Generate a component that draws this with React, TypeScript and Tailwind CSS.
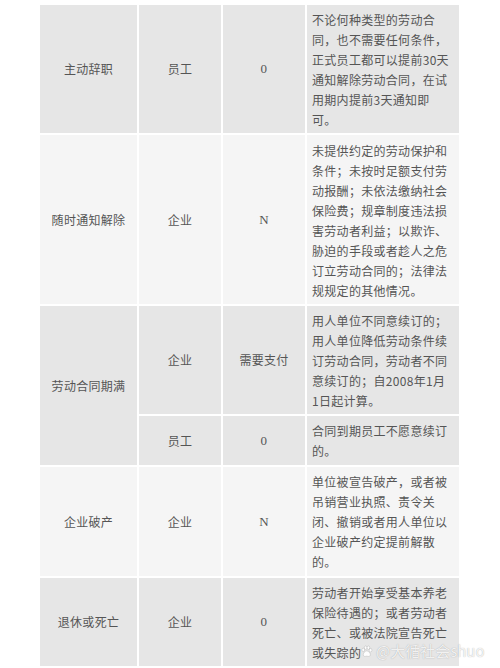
import React from 'react';

const DARK = 'bg-[#e6e6e6]';
const LIGHT = 'bg-[#f5f5f5]';

const Cell: React.FC<{ bg: string; className?: string; children: React.ReactNode }> = ({ bg, className = '', children }) => (
  <div className={`${bg} flex items-center justify-center text-center ${className}`}>{children}</div>
);

const Desc: React.FC<{ bg: string; lines: string[]; className?: string }> = ({ bg, lines, className = '' }) => (
  <div className={`${bg} pl-[5px] pt-[5px] leading-[20px] text-[#555] ${className}`}>
    {lines.map((l, i) => (
      <div key={i} className="whitespace-nowrap">{l}</div>
    ))}
  </div>
);

const serif = "font-['Liberation_Serif',serif] text-[13px]";

export default function App() {
  return (
    <div className="relative w-[500px] h-[668px] bg-white overflow-hidden font-['Noto_Sans_CJK_SC','Noto_Sans',sans-serif] text-[12px] tracking-[0.3px] text-[#555]">
      <div className="ml-[40px] mt-[5px] grid grid-cols-[97px_82px_82px_152px] grid-rows-[128px_169px_108px_49px_109px_88px] gap-[2px]">
        {/* 主动辞职 */}
        <Cell bg={DARK}>主动辞职</Cell>
        <Cell bg={DARK}>员工</Cell>
        <Cell bg={DARK}><span className={serif}>0</span></Cell>
        <Desc
          bg={DARK}
          lines={[
            '不论何种类型的劳动合',
            '同，也不需要任何条件，',
            '正式员工都可以提前30天',
            '通知解除劳动合同，在试',
            '用期内提前3天通知即',
            '可。',
          ]}
        />

        {/* 随时通知解除 */}
        <Cell bg={LIGHT}>随时通知解除</Cell>
        <Cell bg={LIGHT}>企业</Cell>
        <Cell bg={LIGHT}><span className={serif}>N</span></Cell>
        <Desc
          bg={LIGHT}
          className="pt-[6px]"
          lines={[
            '未提供约定的劳动保护和',
            '条件；未按时足额支付劳',
            '动报酬；未依法缴纳社会',
            '保险费；规章制度违法损',
            '害劳动者利益；以欺诈、',
            '胁迫的手段或者趁人之危',
            '订立劳动合同的；法律法',
            '规规定的其他情况。',
          ]}
        />

        {/* 劳动合同期满 */}
        <Cell bg={DARK} className="row-span-2">劳动合同期满</Cell>
        <Cell bg={DARK}>企业</Cell>
        <Cell bg={DARK}>需要支付</Cell>
        <Desc
          bg={DARK}
          lines={[
            '用人单位不同意续订的；',
            '用人单位降低劳动条件续',
            '订劳动合同，劳动者不同',
            '意续订的；自2008年1月',
            '1日起计算。',
          ]}
        />
        <Cell bg={DARK}>员工</Cell>
        <Cell bg={DARK}><span className={serif}>0</span></Cell>
        <Desc bg={DARK} lines={['合同到期员工不愿意续订', '的。']} />

        {/* 企业破产 */}
        <Cell bg={LIGHT}>企业破产</Cell>
        <Cell bg={LIGHT}>企业</Cell>
        <Cell bg={LIGHT}><span className={serif}>N</span></Cell>
        <Desc
          bg={LIGHT}
          lines={[
            '单位被宣告破产，或者被',
            '吊销营业执照、责令关',
            '闭、撤销或者用人单位以',
            '企业破产约定提前解散',
            '的。',
          ]}
        />

        {/* 退休或死亡 */}
        <Cell bg={DARK}>退休或死亡</Cell>
        <Cell bg={DARK}>企业</Cell>
        <Cell bg={DARK}><span className={serif}>0</span></Cell>
        <Desc
          bg={DARK}
          lines={[
            '劳动者开始享受基本养老',
            '保险待遇的；或者劳动者',
            '死亡、或被法院宣告死亡',
            '或失踪的',
          ]}
        />
      </div>

      {/* watermark */}
      <div className="absolute left-[360px] top-[640px] flex items-center gap-[3px] text-white/85 text-[15px] tracking-normal [text-shadow:0_0_1px_rgba(0,0,0,0.35)]">
        <svg width="13" height="13" viewBox="0 0 24 24" fill="rgba(255,255,255,0.9)" stroke="rgba(0,0,0,0.25)" strokeWidth="0.8">
          <ellipse cx="6" cy="9" rx="2.5" ry="3.2" />
          <ellipse cx="10.5" cy="5" rx="2.5" ry="3.2" />
          <ellipse cx="15.5" cy="5" rx="2.5" ry="3.2" />
          <ellipse cx="19.5" cy="9.5" rx="2.5" ry="3.2" />
          <path d="M12.5 11c-3.5 0-6.5 4-6.5 7 0 2 1.5 3 3.5 3 1.3 0 2-.6 3-.6s1.7.6 3 .6c2 0 3.5-1 3.5-3 0-3-3-7-6.5-7z" />
        </svg>
        <span>@大循社会shuo</span>
      </div>
    </div>
  );
}
